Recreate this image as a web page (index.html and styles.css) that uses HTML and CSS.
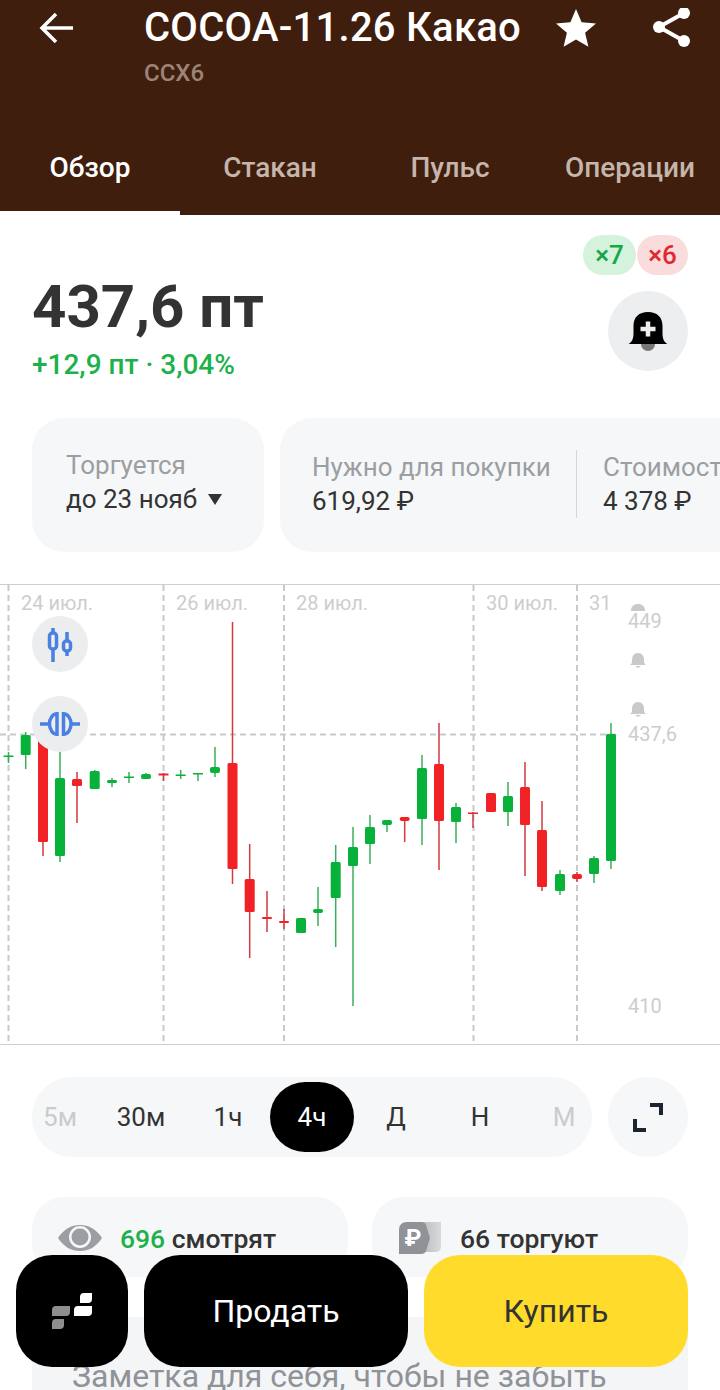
FILE: index.html
```html
<!DOCTYPE html>
<html lang="ru">
<head>
    <meta charset="UTF-8">
    <meta name="viewport" content="width=device-width, initial-scale=1.0">
    <title>COCOA-11.26 Какао</title>
    <link rel="stylesheet" href="styles.css">
</head>
<body>
<div class="page">
    <header class="head">
        <div class="head-top">
            <div class="back">
                <svg width="36" height="36" viewBox="0 0 36 36"><path class="line-white" d="M35 17H4M18 3L4 17l14 14"/></svg>
            </div>
            <div class="names">
                <h1>COCOA-11.26 Какао</h1>
                <p>CCX6</p>
            </div>
            <svg class="star" width="40" height="40" viewBox="0 0 40 40"><path d="M20 1l5.6 13.2 14.4 1.2-10.900 9.400 3.300 14-12.400-7.400-12.400 7.400 3.300-14L0 15.400l14.400-1.200z"/></svg>
            <svg class="share" width="40" height="40" viewBox="0 0 40 40">
                <path d="M32 5L7 19l25 14"/>
                <circle cx="32" cy="5" r="6"/>
                <circle cx="7" cy="19" r="6"/>
                <circle cx="32" cy="33" r="6"/>
            </svg>
        </div>
        <nav class="tabs">
            <a class="tab active">Обзор</a>
            <a class="tab">Стакан</a>
            <a class="tab">Пульс</a>
            <a class="tab">Операции</a>
        </nav>
    </header>

    <section class="quote">
        <div>
            <div class="price">437,6 пт</div>
            <div class="change">+12,9 пт · 3,04%</div>
        </div>
        <div class="quote-side">
            <div class="pills">
                <span class="pill pill-long">×7</span>
                <span class="pill pill-short">×6</span>
            </div>
            <div class="round-btn">
                <svg width="44" height="44" viewBox="0 0 44 44">
                    <circle cx="22" cy="35" r="7" fill="#777"/>
                    <path d="M2.500 35c3.500-2 5-5 5-11v-7C7.500 8 13 3 22 3s14.500 5 14.500 14v7c0 6 1.500 9 5 11z"/>
                    <path class="plus" d="M22 12.500v15M14.500 20h15"/>
                </svg>
            </div>
        </div>
    </section>

    <section class="facts">
        <div class="fact-card">
            <div class="fact-label">Торгуется</div>
            <div class="fact-value">до 23 нояб <i class="caret"></i></div>
        </div>
        <div class="fact-card fact-wide">
            <div class="fact-cell">
                <div class="fact-label">Нужно для покупки</div>
                <div class="fact-value">619,92 ₽</div>
            </div>
            <div class="fact-cell fact-second">
                <div class="fact-label">Стоимость</div>
                <div class="fact-value">4 378 ₽</div>
            </div>
        </div>
    </section>

    <section class="chart">
        <svg class="chart-svg" width="720" height="461" viewBox="0 584 720 461">
            <path class="frame" d="M0 584.500H720M0 1044.500H720"/>
            <path class="dash" d="M8.500 585V1044M163.500 585V1044M284 585V1044M473.500 585V1044M577 585V1044M0 734.500H620"/>

            <g class="axis">
                <text x="21" y="610">24 июл.</text>
                <text x="176" y="610">26 июл.</text>
                <text x="296" y="610">28 июл.</text>
                <text x="486" y="610">30 июл.</text>
                <text x="589" y="610">31</text>
                <text x="628" y="628">449</text>
                <text x="628" y="741">437,6</text>
                <text x="628" y="1013">410</text>
            </g>

            <!-- alert marks on the price scale -->
            <g class="marks">
                <path d="M631 611c0-5 3-7 7-7s7 2 7 7z"/>
                <path d="M630 665c2-1 2-3 2-5 0-4 2-7 6-7s6 3 6 7c0 2 0 4 2 5zM635 666h6l-3 2z"/>
                <path d="M630 714c2-1 2-3 2-5 0-4 2-7 6-7s6 3 6 7c0 2 0 4 2 5zM635 715h6l-3 2z"/>
            </g>

            <path class="wick-up" d="M8.500 752V763M25.700 732V769M60 752V862M94.700 770V789M112 778V787M129 772V783M146 773V779M180.700 770V779M198 773V781M215 747V777M301 918V933M318 887V926M335.700 845V947M353 827V1006M370 815V864M387 820V832M422 755V845M456 803V843M508 782V826M560 870V895M594 856V883M611 723V869"/>
            <path class="wick-down" d="M43 740V856M77 772V823M163.500 773V781M232.500 622V884M249.700 844V958M267 891V932M284 909V929M404.700 817V842M439 723V870M473 812V828M525 762V876M542 801V891M577 872V882"/>

            <g class="up">
                <rect x="3.500" y="755.500" width="10" height="1.500"/>
                <rect x="20.700" y="735" width="10" height="20" rx="1.500"/>
                <rect x="55" y="778" width="10" height="78" rx="1.500"/>
                <rect x="89.700" y="771" width="10" height="18" rx="1.500"/>
                <rect x="107" y="780" width="10" height="3" rx="1.500"/>
                <rect x="124" y="776.500" width="10" height="1.500"/>
                <rect x="141" y="774" width="10" height="5" rx="2"/>
                <rect x="175.700" y="774.500" width="10" height="1.500"/>
                <rect x="193" y="773" width="10" height="1.500"/>
                <rect x="210" y="767" width="10" height="6" rx="2"/>
                <rect x="296" y="918" width="10" height="15" rx="1.500"/>
                <rect x="313" y="909" width="10" height="4" rx="2"/>
                <rect x="330.700" y="862" width="10" height="36" rx="1.500"/>
                <rect x="348" y="847" width="10" height="19" rx="1.500"/>
                <rect x="365" y="827" width="10" height="17" rx="1.500"/>
                <rect x="382" y="820" width="10" height="5" rx="2"/>
                <rect x="417" y="768" width="10" height="51" rx="1.500"/>
                <rect x="451" y="807" width="10" height="15" rx="1.500"/>
                <rect x="503" y="796" width="10" height="16" rx="1.500"/>
                <rect x="555" y="874" width="10" height="17" rx="1.500"/>
                <rect x="589" y="858" width="10" height="16" rx="1.500"/>
                <rect x="606" y="734" width="10" height="127" rx="1.500"/>
            </g>
            <g class="down">
                <rect x="38" y="740" width="10" height="102" rx="1.500"/>
                <rect x="72" y="779" width="10" height="7" rx="1.500"/>
                <rect x="158.500" y="773.500" width="10" height="2"/>
                <rect x="227.500" y="763" width="10" height="106" rx="1.500"/>
                <rect x="244.700" y="879" width="10" height="33" rx="1.500"/>
                <rect x="262" y="917" width="10" height="2" rx="1"/>
                <rect x="279" y="921" width="10" height="2" rx="1"/>
                <rect x="399.700" y="817" width="10" height="4" rx="2"/>
                <rect x="434" y="764" width="10" height="57" rx="1.500"/>
                <rect x="468" y="812.500" width="10" height="1.500"/>
                <rect x="486" y="793" width="10" height="19" rx="1.500"/>
                <rect x="520" y="787" width="10" height="38" rx="1.500"/>
                <rect x="537" y="830" width="10" height="57" rx="1.500"/>
                <rect x="572" y="874" width="10" height="5" rx="2"/>
            </g>
        </svg>

        <div class="chart-tool tool-candles">
            <svg width="56" height="56" viewBox="0 0 56 56">
                <path d="M21 12V17M21 33V46M35 16V25M35 35V40"/>
                <rect x="17.500" y="17" width="7" height="16" rx="3"/>
                <rect x="31.500" y="25" width="7" height="10" rx="3"/>
            </svg>
        </div>
        <div class="chart-tool tool-compare">
            <svg width="56" height="56" viewBox="0 0 56 56">
                <path d="M8 28H17.500M39 28H48"/>
                <path d="M25 17.750a7.500 10.250 0 0 0 0 20.500zM31.500 17.750a7.500 10.250 0 0 1 0 20.500z"/>
            </svg>
        </div>
    </section>

    <section class="periods-row">
        <div class="periods">
            <span class="period muted">5м</span>
            <span class="period shifted">30м</span>
            <span class="period">1ч</span>
            <span class="period active">4ч</span>
            <span class="period">Д</span>
            <span class="period">Н</span>
            <span class="period muted">М</span>
        </div>
        <div class="round-btn light">
            <svg width="36" height="36" viewBox="0 0 36 36"><path class="expand" d="M20 6H31V16M5 20V31H16"/></svg>
        </div>
    </section>

    <section class="stats">
        <div class="stat">
            <svg class="eye" width="44" height="28" viewBox="0 0 44 28">
                <path d="M0 14C6 5 13 1 22 1s16 4 22 13c-6 9-13 13-22 13S6 23 0 14z"/>
                <circle class="eye-ring" cx="22" cy="13" r="11"/>
                <circle cx="22" cy="13" r="8.500"/>
            </svg>
            <span class="stat-text"><b>696</b> смотрят</span>
        </div>
        <div class="stat stat-right">
            <svg class="tag" width="42" height="32" viewBox="0 0 42 32">
                <defs>
                    <linearGradient id="tagFade" x1="0" x2="1">
                        <stop offset="0" stop-color="#a9abae"/>
                        <stop offset="1" stop-color="#d9dadc"/>
                    </linearGradient>
                </defs>
                <path d="M12 0H42V24c0 4-2 6-6 6H12z" fill="url(#tagFade)"/>
                <path d="M8 0H22c3 0 4 1 5 3l4 13-4 13c-1 2-2 3-5 3H0V8c0-5 3-8 8-8z" fill="#8f9296"/>
                <text x="14" y="24" text-anchor="middle">₽</text>
            </svg>
            <span class="stat-text">66 торгуют</span>
        </div>
    </section>

    <section class="note">Заметка для себя, чтобы не забыть</section>

    <div class="actions">
        <button class="act act-menu">
            <svg width="42" height="38" viewBox="0 0 42 38">
                <path fill="#8e8e8e" d="M5 14H19V20a4 4 0 0 1-4 4H1V18a4 4 0 0 1 4-4zM5 27H13V33a4 4 0 0 1-4 4H1V31a4 4 0 0 1 4-4z"/>
                <path fill="#fff" d="M33 1H41V7a4 4 0 0 1-4 4H29V5a4 4 0 0 1 4-4zM27 14H41V20a4 4 0 0 1-4 4H23V18a4 4 0 0 1 4-4z"/>
            </svg>
        </button>
        <button class="act act-sell">Продать</button>
        <button class="act act-buy">Купить</button>
    </div>
</div>
</body>
</html>
```

FILE: styles.css
```css
* {
    box-sizing: border-box;
}

body {
    margin: 0;
    background-color: #fff;
    font-family: Roboto, "Noto Sans", sans-serif;
    color: #333;
}

.page {
    position: relative;
    width: 720px;
    height: 1390px;
    overflow: hidden;
}

/* header */
.head {
    height: 215px;
    background-color: #3f1e0d;
    color: #fff;
}

.head-top {
    display: flex;
    height: 135px;
}

.back {
    width: 144px;
    padding: 11px 0 0 38px;
}

.line-white {
    fill: none;
    stroke: #fff;
    stroke-width: 3.5;
}

.names {
    width: 412px;
}

.names h1 {
    margin: 0;
    font-size: 40px;
    font-weight: 500;
    line-height: 56px;
    letter-spacing: 0.25px;
    white-space: nowrap;
}

.names p {
    margin: 0;
    font-size: 24px;
    font-weight: 500;
    line-height: 34px;
    color: #9c8477;
}

.star {
    margin-top: 8px;
    fill: #fff;
}

.share {
    margin: 8px 0 0 56px;
    fill: #fff;
}

.share path {
    fill: none;
    stroke: #fff;
    stroke-width: 4;
}

.tabs {
    display: flex;
}

.tab {
    width: 180px;
    padding: 16px 0 26px;
    border-bottom: 4px solid transparent;
    text-align: center;
    font-size: 28px;
    font-weight: 500;
    line-height: 34px;
    color: #c6b5ab;
}

.tab.active {
    border-bottom-color: #fff;
    color: #fff;
}

/* price block */
.quote {
    display: flex;
    justify-content: space-between;
    height: 203px;
    padding: 20px 32px 0 32px;
}

.price {
    margin-top: 40px;
    font-size: 60px;
    font-weight: 700;
    line-height: 64px;
}

.change {
    margin-top: 8px;
    font-size: 28px;
    font-weight: 500;
    line-height: 36px;
    color: #1db14b;
}

.quote-side {
    display: flex;
    flex-direction: column;
    align-items: flex-end;
}

.pills {
    display: flex;
    gap: 1px;
}

.pill {
    width: 53px;
    height: 40px;
    border-radius: 20px;
    text-align: center;
    font-size: 26px;
    font-weight: 500;
    line-height: 40px;
}

.pill-long {
    background-color: #d5f2dd;
    color: #16a844;
}

.pill-short {
    width: 51px;
    background-color: #fbdcdd;
    color: #dd2a30;
}

.round-btn {
    display: flex;
    align-items: center;
    justify-content: center;
    flex: none;
    width: 80px;
    height: 80px;
    margin-top: 16px;
    border-radius: 50%;
    background-color: #edeeef;
}

.round-btn.light {
    margin-top: 0;
    background-color: #f6f7f8;
}

.plus {
    fill: none;
    stroke: #eee;
    stroke-width: 4.5;
}

/* cards under the price */
.facts {
    display: flex;
    gap: 16px;
    margin-left: 32px;
    overflow: hidden;
}

.fact-card {
    flex: none;
    width: 232px;
    height: 134px;
    padding: 30px 0 0 34px;
    border-radius: 32px;
    background-color: #f6f7f8;
}

.fact-wide {
    display: flex;
    width: 520px;
    padding: 0 0 2px 32px;
    align-items: center;
}

.fact-cell {
    width: 264px;
    flex: none;
    white-space: nowrap;
}

.fact-second {
    height: 68px;
    padding: 0 0 0 26px;
    border-left: 1px solid #d4d6d8;
}

.fact-label {
    font-size: 26px;
    line-height: 34px;
    color: #9b9ea2;
}

.fact-value {
    font-size: 26px;
    line-height: 34px;
    color: #333;
}

.caret {
    display: inline-block;
    margin-left: 4px;
    vertical-align: 3px;
    border-top: 11px solid #333;
    border-left: 7px solid transparent;
    border-right: 7px solid transparent;
}

/* chart */
.chart {
    position: relative;
    height: 461px;
    margin-top: 32px;
}

.chart-svg {
    display: block;
}

.frame {
    fill: none;
    stroke: #cfcfcf;
    stroke-width: 1;
}

.dash {
    fill: none;
    stroke: #c9c9c9;
    stroke-width: 2;
    stroke-dasharray: 6 4;
}

.axis text {
    font-size: 20px;
    fill: #cdcdcd;
}

.marks {
    fill: #c9c9c9;
}

.wick-up,
.wick-down {
    fill: none;
    stroke-width: 1.5;
}

.wick-up {
    stroke: #3aae5c;
}

.wick-down {
    stroke: #d23a3f;
}

.up {
    fill: #08b23a;
}

.down {
    fill: #f02226;
}

.chart-tool {
    position: absolute;
    left: 32px;
    width: 56px;
    height: 56px;
    border-radius: 50%;
    background-color: #ecedef;
}

.chart-tool svg {
    display: block;
    fill: none;
    stroke: #4a80e0;
    stroke-width: 3.5;
}

.tool-candles {
    top: 32px;
}

.tool-compare {
    top: 112px;
}

/* period switch */
.periods-row {
    display: flex;
    gap: 16px;
    margin: 32px 32px 0;
}

.periods {
    display: flex;
    flex: none;
    align-items: center;
    width: 560px;
    height: 80px;
    overflow: hidden;
    border-radius: 40px;
    background-color: #f6f7f8;
}

.period {
    flex: none;
    width: 84px;
    height: 70px;
    border-radius: 35px;
    text-align: center;
    font-size: 26px;
    line-height: 70px;
    color: #333;
}

.period:first-child {
    margin-left: -14px;
}

.period.shifted {
    padding-right: 6px;
}

.period.muted {
    color: #c9cbcd;
}

.period.active {
    background-color: #000;
    color: #fff;
}

.expand {
    fill: none;
    stroke: #1b2430;
    stroke-width: 4;
}

/* viewers */
.stats {
    display: flex;
    gap: 24px;
    margin: 40px 32px 0;
}

.stat {
    display: flex;
    align-items: flex-start;
    flex: none;
    width: 316px;
    height: 80px;
    padding: 27px 0 0 26px;
    border-radius: 32px;
    background-color: #f6f7f8;
}

.stat-right {
    padding-left: 27px;
}

.eye {
    flex: none;
    fill: #9b9ea2;
}

.eye-ring {
    fill: #f6f7f8;
}

.tag {
    flex: none;
    margin-top: -2px;
}

.tag text {
    font-size: 24px;
    font-weight: 700;
    fill: #fff;
}

.stat-text {
    margin: -2px 0 0 18px;
    font-size: 26.5px;
    font-weight: 500;
    line-height: 34px;
}

.stat-right .stat-text {
    margin-left: 19px;
}

.stat-text b {
    font-weight: 500;
    color: #1db14b;
}

.note {
    height: 90px;
    margin: 40px 32px 0;
    padding: 39px 0 0 40px;
    background-color: #f4f5f7;
    font-size: 32px;
    line-height: 40px;
    color: #8f9296;
    white-space: nowrap;
}

.actions {
    position: absolute;
    left: 16px;
    right: 32px;
    top: 1255px;
    display: flex;
    gap: 16px;
}

.act {
    height: 112px;
    padding: 0;
    border: none;
    border-radius: 36px;
    font-family: inherit;
    font-size: 32px;
}

.act-menu {
    display: flex;
    align-items: center;
    justify-content: center;
    width: 112px;
    background-color: #000;
}

.act-sell {
    width: 264px;
    background-color: #000;
    color: #fff;
}

.act-buy {
    width: 264px;
    background-color: #ffdb2b;
    color: #333;
}
```
